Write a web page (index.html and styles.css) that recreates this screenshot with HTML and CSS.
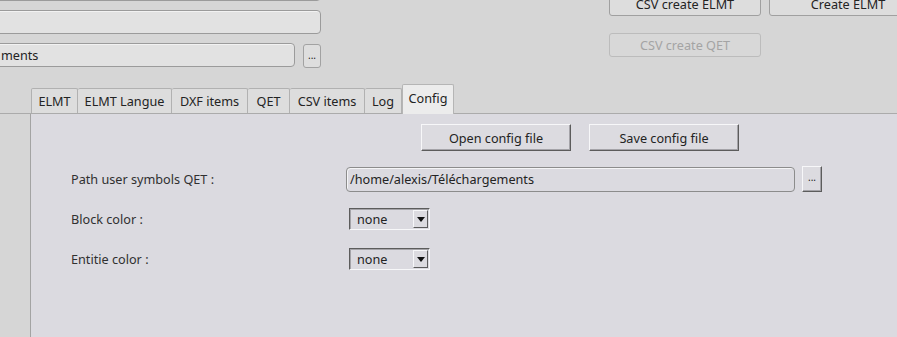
FILE: index.html
```html
<!DOCTYPE html>
<html lang="fr">
<head>
	<meta charset="UTF-8">
	<title>ELMT creator</title>
	<link rel="stylesheet" href="styles.css">
</head>
<body>
	<div id="top">
		<div id="fields">
			<div class="field field-cut"></div>
			<div class="field"></div>
			<div class="field-row">
				<div class="field field-short">ments</div>
				<span class="dots">...</span>
			</div>
		</div>
		<div class="actions">
			<div class="action-col">
				<button class="btn btn-first">CSV create ELMT</button>
				<button class="btn btn-off">CSV create QET</button>
			</div>
			<div class="action-col">
				<button class="btn btn-first btn-wide">Create ELMT</button>
			</div>
		</div>
	</div>

	<ul id="tabs">
		<li>ELMT</li>
		<li>ELMT Langue</li>
		<li>DXF items</li>
		<li>QET</li>
		<li>CSV items</li>
		<li>Log</li>
		<li class="select">Config</li>
	</ul>

	<div id="pane">
		<div class="btn-row">
			<button class="raised">Open config file</button>
			<button class="raised">Save config file</button>
		</div>
		<div class="form">
			<div class="form-row">
				<label>Path user symbols QET :</label>
				<div class="path">/home/alexis/Téléchargements</div>
				<span class="raised small">...</span>
			</div>
			<div class="form-row">
				<label>Block color :</label>
				<div class="combo"><span>none</span><i class="arrow"></i></div>
			</div>
			<div class="form-row">
				<label>Entitie color :</label>
				<div class="combo"><span>none</span><i class="arrow"></i></div>
			</div>
		</div>
	</div>
</body>
</html>
```
FILE: styles.css
```css
*{
	margin:0;
	padding:0;
	box-sizing:border-box;
}
ul{
	list-style:none;
}
html,body{
	height:100%;
	overflow:hidden;
}
body{
	background-color:#d6d6d6;
	font-family:"Noto Sans","DejaVu Sans",sans-serif;
	font-size:12.67px;
	color:#232323;
}
button{
	font:inherit;
	color:inherit;
}
#top{
	display:flex;
	height:85px;
}
#fields{
	width:361px;
	margin-left:-40px;
	flex-shrink:0;
}
.field{
	height:24px;
	border:1px solid #9b9b9b;
	border-radius:4px;
	background-color:#e2e2e2;
	box-shadow:inset 0 1px 0 #f2f2f2;
	line-height:22px;
	padding-left:40px;
}
.field-cut{
	margin-top:-23px;
}
.field + .field{
	margin-top:9px;
}
.field-row{
	display:flex;
	margin-top:9px;
}
.field-short{
	width:335px;
}
.dots{
	width:18px;
	height:24px;
	margin-left:8px;
	margin-top:1px;
	border:1px solid #a2a2a2;
	border-radius:3px;
	background-color:#dedede;
	font-size:10px;
	line-height:20px;
	text-align:center;
}
.actions{
	display:flex;
	margin-left:288px;
}
.action-col{
	display:flex;
	flex-direction:column;
	flex-shrink:0;
}
.action-col + .action-col{
	margin-left:8px;
}
.btn{
	width:152px;
	height:25px;
	border:1px solid #a0a0a0;
	border-radius:3px;
	background-color:#dddddd;
	line-height:22px;
}
.btn-first{
	margin-top:-9px;
}
.btn-wide{
	width:160px;
	padding-right:2px;
}
.btn-off{
	margin-top:17px;
	height:24px;
	color:#a4a4a4;
	border-color:#bcbcbc;
	background-color:#d8d8d8;
}
#tabs{
	display:flex;
	align-items:flex-end;
	height:29px;
	padding-left:31px;
	border-bottom:1px solid #ababab;
}
#tabs li{
	height:25px;
	border:1px solid #b1b1b1;
	border-bottom:none;
	border-left:none;
	border-radius:2px 2px 0 0;
	background-color:#dddddd;
	line-height:25px;
	text-align:center;
	white-space:nowrap;
}
#tabs li:nth-child(1){
	width:47px;
	border-left:1px solid #b1b1b1;
}
#tabs li:nth-child(2){
	width:94px;
}
#tabs li:nth-child(3){
	width:76px;
}
#tabs li:nth-child(4){
	width:42px;
}
#tabs li:nth-child(5){
	width:75px;
}
#tabs li:nth-child(6){
	width:37px;
}
#tabs .select{
	width:52px;
	height:30px;
	margin-bottom:-1px;
	border:1px solid #b5b5b5;
	border-bottom:none;
	background-color:#ececec;
	line-height:26px;
}
#pane{
	height:100%;
	margin-left:30px;
	border-left:1px solid #a3a3a3;
	background-color:#dbdae0;
}
.btn-row{
	display:flex;
	gap:18px;
	padding:10px 0 0 390px;
}
.raised{
	width:150px;
	height:27px;
	border:1px solid;
	border-color:#f7f7f9 #5c5c5c #5c5c5c #f7f7f9;
	box-shadow:inset -1px -1px 0 #a4a3a8;
	background-color:#dcdbe0;
	line-height:24px;
	text-align:center;
}
.form{
	display:flex;
	flex-direction:column;
	gap:14px;
	padding:15px 0 0 40px;
}
.form-row{
	display:flex;
	align-items:center;
	height:26px;
}
.form-row label{
	width:275px;
	color:#303030;
}
.path{
	width:449px;
	height:25px;
	margin-top:1px;
	padding-left:3px;
	border:1px solid #8c8c8c;
	border-radius:4px;
	box-shadow:inset 1px 1px 0 #f4f4f6;
	background-color:#dbdae0;
	line-height:23px;
}
.raised.small{
	width:20px;
	height:26px;
	margin-left:7px;
	font-size:10px;
	line-height:20px;
}
.combo{
	display:flex;
	align-items:center;
	justify-content:space-between;
	width:81px;
	height:22px;
	margin-left:3px;
	padding:0 1px 0 7px;
	border:1px solid;
	border-color:#5c5c5c #f7f7f9 #f7f7f9 #5c5c5c;
	box-shadow:inset 1px 1px 0 #a4a3a8;
}
.arrow{
	position:relative;
	width:15px;
	height:18px;
	border:1px solid;
	border-color:#f7f7f9 #5c5c5c #5c5c5c #f7f7f9;
	background-color:#dcdbe0;
}
.arrow:after{
	content:"";
	position:absolute;
	left:3px;
	top:6px;
	border-style:solid;
	border-width:5px 4px 0 4px;
	border-color:#111 transparent transparent transparent;
}
```
